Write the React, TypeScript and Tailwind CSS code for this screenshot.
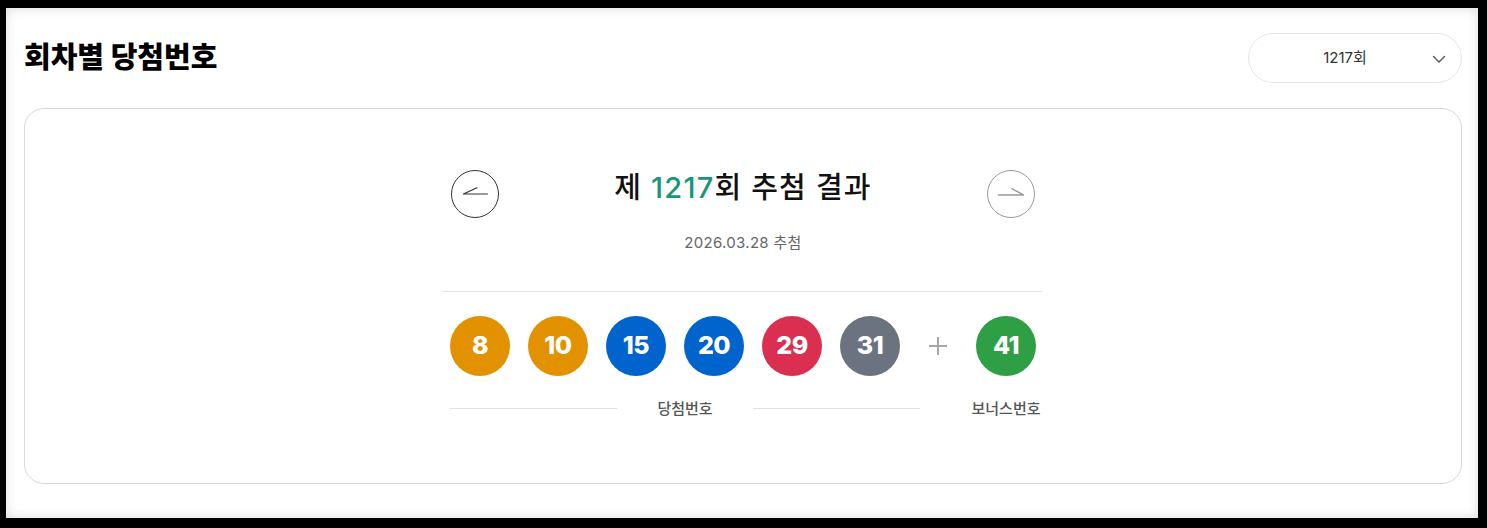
import React from "react";

const balls = [
  { n: 8, c: "bg-[#e29100]" },
  { n: 10, c: "bg-[#e29100]" },
  { n: 15, c: "bg-[#0064cc]" },
  { n: 20, c: "bg-[#0064cc]" },
  { n: 29, c: "bg-[#da2f50]" },
  { n: 31, c: "bg-[#6b7280]" },
];

function Ball({ n, c }: { n: number; c: string }) {
  return (
    <div
      className={`w-[60px] h-[60px] rounded-full ${c} flex items-center justify-center text-white text-[25px] font-extrabold tracking-[-0.5px] font-['Inter','Noto_Sans_CJK_KR',sans-serif]`}
    >
      {n}
    </div>
  );
}

export default function App() {
  return (
    <div className="w-[1487px] h-[528px] bg-black pt-[8px] pl-[6px] pr-[9px] pb-[10px] font-['Inter','Noto_Sans_CJK_KR',sans-serif]">
      <div className="h-full bg-white shadow-[inset_0_0_12px_rgba(0,0,0,0.14)] pl-[18px] pr-[16px] pt-[25px]">
        {/* header */}
        <div className="flex items-center justify-between h-[50px]">
          <h1 className="-mt-[6px] text-[29px] leading-[36px] font-black text-black font-['Noto_Sans_CJK_KR',sans-serif]">
            회차별 당첨번호
          </h1>
          <div className="relative w-[214px] h-[50px] rounded-full border border-[#e3e6ea] bg-white flex items-center pr-[20px]">
            <span className="flex-1 text-center text-[15px] text-[#333]">1217회</span>
            <svg
              className="absolute right-[15px] top-[20px]"
              width="14"
              height="10"
              viewBox="0 0 14 10"
              fill="none"
            >
              <path d="M1.5 2.5 L7 8 L12.5 2.5" stroke="#555" strokeWidth="1.4" strokeLinecap="round" strokeLinejoin="round" />
            </svg>
          </div>
        </div>

        {/* card */}
        <div className="mt-[25px] h-[376px] rounded-[20px] border border-[#d9d9d9] bg-white flex justify-center pt-[61px]">
          <div className="w-[600px] flex flex-col">
            <div className="flex items-start justify-between px-[8px]">
              <button className="w-[48px] h-[48px] rounded-full border border-[#333] flex items-center justify-center">
                <svg width="48" height="48" viewBox="0 0 48 48" fill="none">
                  <path d="M12 24 H37 M12 24 L26 17.5" stroke="#333" strokeWidth="1.3" strokeLinecap="round" />
                </svg>
              </button>
              <div className="flex flex-col items-center">
                <div className="text-[29px] leading-[36px] font-medium text-[#111] tracking-[1.2px]">
                  제 <span className="text-[#16967a]">1217</span>회 추첨 결과
                </div>
                <div className="mt-[27px] text-[15px] leading-[20px] text-[#666] tracking-[0.3px]">2026.03.28 추첨</div>
              </div>
              <button className="w-[48px] h-[48px] rounded-full border border-[#9a9a9a] flex items-center justify-center">
                <svg width="48" height="48" viewBox="0 0 48 48" fill="none">
                  <path d="M11 25 H37 M37 25 L25 18.5" stroke="#9a9a9a" strokeWidth="1.5" strokeLinecap="round" />
                </svg>
              </button>
            </div>

            <div className="mt-[38px] h-px bg-[#e3e3e3]" />

            <div className="mt-[24px] px-[7px] flex items-center">
              <div className="flex gap-[18px]">
                {balls.map((b) => (
                  <Ball key={b.n} n={b.n} c={b.c} />
                ))}
              </div>
              <div className="w-[76px] flex items-center justify-center">
                <svg width="20" height="20" viewBox="0 0 20 20" fill="none">
                  <path d="M10 1 V19 M1 10 H19" stroke="#a6a8ae" strokeWidth="2" />
                </svg>
              </div>
              <Ball n={41} c="bg-[#2e9f45]" />
            </div>

            <div className="mt-[22px] px-[7px] flex items-center">
              <div className="w-[470px] flex items-center">
                <div className="flex-1 h-px bg-[#e0e0e0]" />
                <span className="mx-[40px] text-[15px] leading-[20px] font-medium text-[#555] font-['Noto_Sans_CJK_KR',sans-serif]">당첨번호</span>
                <div className="flex-1 h-px bg-[#e0e0e0]" />
              </div>
              <div className="ml-[56px] w-[60px] flex justify-center">
                <span className="whitespace-nowrap text-[15px] leading-[20px] font-medium text-[#555] font-['Noto_Sans_CJK_KR',sans-serif]">보너스번호</span>
              </div>
            </div>
          </div>
        </div>
      </div>
    </div>
  );
}
